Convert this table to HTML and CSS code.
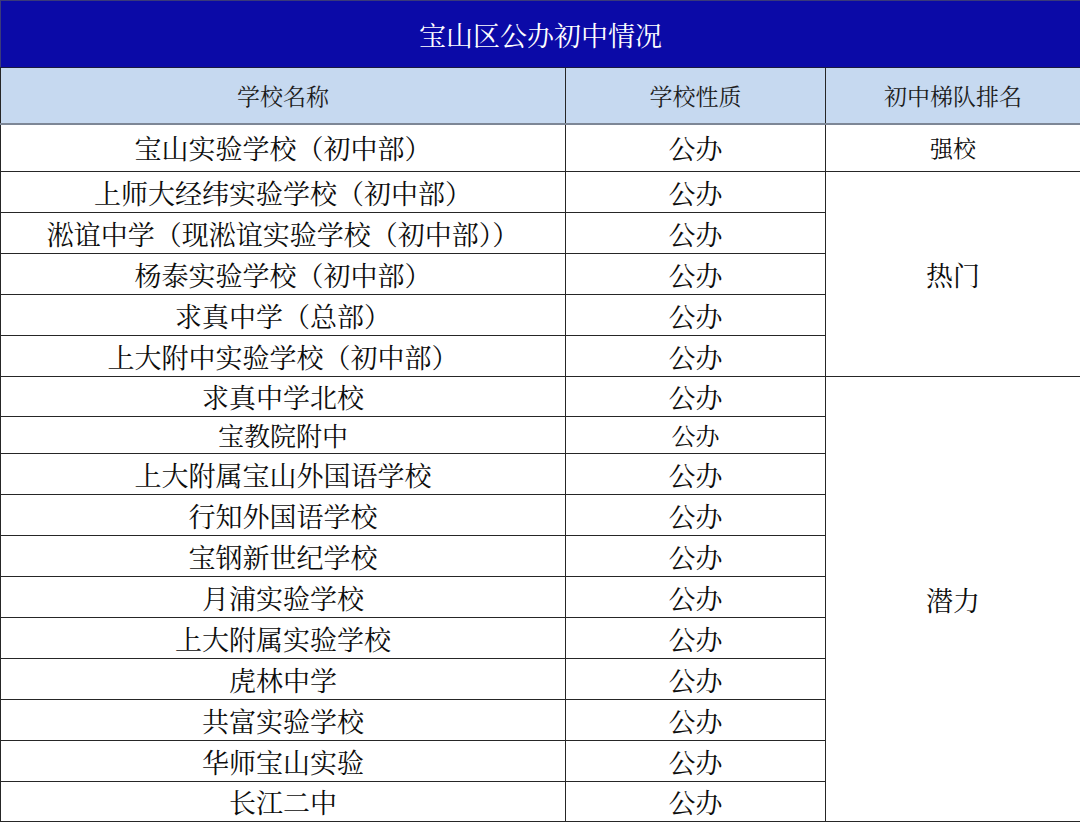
FILE: index.html
```html
<!DOCTYPE html>
<html lang="zh-CN">
<head>
<meta charset="utf-8">
<title>宝山区公办初中情况</title>
<link rel="stylesheet" href="styles.css">
</head>
<body>
<table class="sheet">
  <colgroup>
    <col class="c-name">
    <col class="c-type">
    <col class="c-rank">
  </colgroup>
  <tr class="r-title"><td colspan="3" class="title">宝山区公办初中情况</td></tr>
  <tr class="r-head">
    <td class="head">学校名称</td>
    <td class="head">学校性质</td>
    <td class="head">初中梯队排名</td>
  </tr>
  <tr class="r-first"><td>宝山实验学校（初中部）</td><td>公办</td><td class="rank-sm">强校</td></tr>
  <tr><td>上师大经纬实验学校（初中部）</td><td>公办</td><td rowspan="5" class="rank">热门</td></tr>
  <tr><td>淞谊中学（现淞谊实验学校（初中部））</td><td>公办</td></tr>
  <tr><td>杨泰实验学校（初中部）</td><td>公办</td></tr>
  <tr><td>求真中学（总部）</td><td>公办</td></tr>
  <tr><td>上大附中实验学校（初中部）</td><td>公办</td></tr>
  <tr class="r-40"><td>求真中学北校</td><td>公办</td><td rowspan="11" class="rank">潜力</td></tr>
  <tr class="r-small"><td class="sm">宝教院附中</td><td class="xs">公办</td></tr>
  <tr><td>上大附属宝山外国语学校</td><td>公办</td></tr>
  <tr><td>行知外国语学校</td><td>公办</td></tr>
  <tr><td>宝钢新世纪学校</td><td>公办</td></tr>
  <tr><td>月浦实验学校</td><td>公办</td></tr>
  <tr><td>上大附属实验学校</td><td>公办</td></tr>
  <tr><td>虎林中学</td><td>公办</td></tr>
  <tr><td>共富实验学校</td><td>公办</td></tr>
  <tr><td>华师宝山实验</td><td>公办</td></tr>
  <tr class="r-40"><td>长江二中</td><td>公办</td></tr>
</table>
</body>
</html>
```

FILE: styles.css
```css
html, body {
  margin: 0;
  padding: 0;
  background: #ffffff;
}

body {
  font-family: "Noto Serif CJK SC", "Noto Sans CJK SC", sans-serif;
  color: #0d0d0d;
}

.sheet {
  width: 1080px;
  border-collapse: collapse;
  table-layout: fixed;
}

.c-name { width: 565px; }
.c-type { width: 260px; }
.c-rank { width: 255px; }

.sheet td {
  border: 1px solid #262626;
  padding: 0;
  text-align: center;
  vertical-align: middle;
  font-size: 27px;
  line-height: 1;
  height: 41px;
  box-sizing: border-box;
  white-space: nowrap;
}

.sheet tr.r-title td {
  height: 67px;
  background: #0b0aa7;
  color: #ffffff;
  font-size: 27px;
  border-color: #3a3a7a;
  border-bottom-color: #1a1a40;
}

.sheet tr.r-head td {
  height: 56px;
  background: #c6d9f0;
  color: #1c1c1c;
  font-size: 23px;
  border-bottom: 2px solid #7d8796;
}

.sheet tr.r-first td {
  height: 48px;
}

.sheet tr.r-40 td {
  height: 40px;
}

.sheet tr.r-small td {
  height: 37px;
}

.sheet td.sm {
  font-size: 26px;
}

.sheet td.xs {
  font-size: 24px;
}

.sheet td.rank-sm {
  font-size: 23px;
}

.sheet td.rank {
  font-size: 27px;
}
```
